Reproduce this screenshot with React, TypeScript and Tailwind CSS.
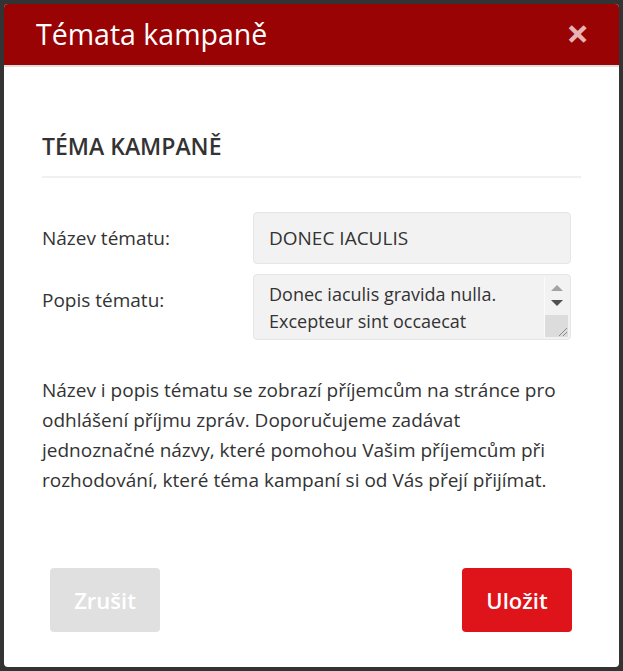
import { useState } from 'react'

function FakeScrollbar() {
  return (
    <div className="w-[24px] shrink-0 flex flex-col border-l border-[#fbfbfb]">
      <div className="h-[38px] flex flex-col items-center pt-[8px] gap-[9px]">
        <svg width="12" height="6" viewBox="0 0 12 6"><path d="M6 0 L12 6 L0 6 Z" fill="#a3a3a3" /></svg>
        <svg width="12" height="6" viewBox="0 0 12 6"><path d="M0 0 L12 0 L6 6 Z" fill="#505050" /></svg>
      </div>
      <div className="flex-1 bg-[#dcdcdc] flex items-end justify-end">
        <svg width="12" height="12" viewBox="0 0 12 12">
          <path d="M11 3 L3 11 M11 7 L7 11" stroke="#8a8a8a" strokeWidth="1" />
        </svg>
      </div>
    </div>
  )
}

export default function App() {
  const [name, setName] = useState('DONEC IACULIS')
  const [desc, setDesc] = useState(
    'Donec iaculis gravida nulla. Excepteur sint occaecat cupidatat non proident, sunt in culpa qui officia deserunt mollit anim id est laborum.'
  )

  return (
    <div className="min-h-screen bg-[#333333] p-[4px] font-['Open_Sans',sans-serif]">
      <div className="w-[615px] h-[663px] bg-white rounded-[4px] flex flex-col overflow-hidden">
        {/* Header */}
        <div className="h-[63px] shrink-0 bg-[#990303] border-b-2 border-[#dedede] flex items-center justify-between pl-[32px] pr-[30px]">
          <h1 className="text-[28.5px] text-white leading-none">Témata kampaně</h1>
          <button className="text-[#e6b4b4] text-[40px] leading-none font-bold -mt-[4px]">×</button>
        </div>

        <div className="flex-1 flex flex-col px-[38px] pt-[64px]">
          <h2 className="text-[23px] font-semibold text-[#333] uppercase leading-[30px]">Téma kampaně</h2>
          <div className="mt-[15px] h-[2px] bg-[#f0f0f0]" />

          {/* Fields */}
          <div className="mt-[34px] flex flex-col gap-[10px]">
            <div className="flex items-center">
              <label className="w-[211px] text-[19px] text-[#333]">Název tématu:</label>
              <input
                value={name}
                onChange={e => setName(e.target.value)}
                className="w-[318px] h-[52px] px-[15px] bg-[#f2f2f2] border border-[#e6e6e6] rounded-[4px] text-[19px] text-[#333] uppercase outline-none"
              />
            </div>
            <div className="flex items-start">
              <label className="w-[211px] pt-[13px] text-[19px] leading-[26px] text-[#333]">Popis tématu:</label>
              <div className="w-[318px] h-[66px] flex bg-[#f2f2f2] border border-[#e6e6e6] rounded-[4px] overflow-hidden pr-[2px] py-[2px]">
                <textarea
                  value={desc}
                  onChange={e => setDesc(e.target.value)}
                  rows={2}
                  className="flex-1 min-w-0 pl-[15px] pr-[4px] pt-[4px] bg-transparent text-[18px] leading-[27px] text-[#333] outline-none resize-none overflow-hidden"
                />
                <FakeScrollbar />
              </div>
            </div>
          </div>

          <p className="mt-[35px] pr-[8px] text-[19px] leading-[30px] text-[#333]">
            Název i popis tématu se zobrazí příjemcům na stránce pro odhlášení příjmu zpráv. Doporučujeme zadávat jednoznačné názvy, které pomohou Vašim příjemcům při rozhodování, které téma kampaní si od Vás přejí přijímat.
          </p>

          {/* Buttons */}
          <div className="mt-auto mb-[35px] flex justify-between pl-[8px] pr-[9px]">
            <button className="w-[110px] h-[64px] rounded-[4px] bg-[#e0e0e0] text-white text-[22px] font-semibold">Zrušit</button>
            <button className="w-[110px] h-[64px] rounded-[4px] bg-[#df131a] text-white text-[22px] font-semibold">Uložit</button>
          </div>
        </div>
      </div>
    </div>
  )
}
